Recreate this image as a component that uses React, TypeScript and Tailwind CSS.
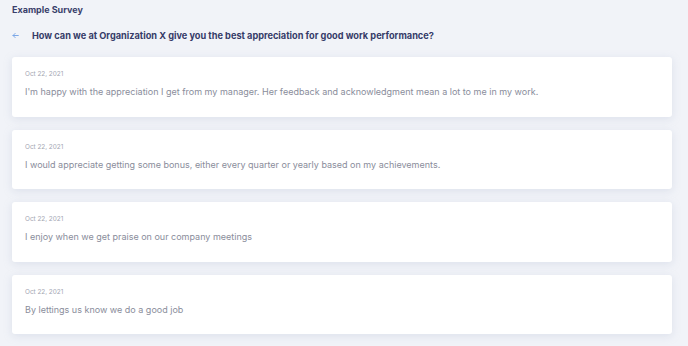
import React from "react";

const responses = [
  "I'm happy with the appreciation I get from my manager. Her feedback and acknowledgment mean a lot to me in my work.",
  "I would appreciate getting some bonus, either every quarter or yearly based on my achievements.",
  "I enjoy when we get praise on our company meetings",
  "By lettings us know we do a good job",
];

export default function App() {
  return (
    <div
      className="w-[688px] h-[346px] overflow-hidden bg-[#f1f3f8] pl-[12px] pr-[16px]"
      style={{ fontFamily: "Inter, 'Noto Sans', sans-serif" }}
    >
      <div className="h-[19px] flex items-center text-[9px] font-bold text-[#3a3f6b]">
        Example Survey
      </div>
      <div className="mt-[8px] h-[17px] flex items-center">
        <svg width="7" height="7" viewBox="0 0 10 10" fill="none" stroke="#7aa6e6" strokeWidth="1.4" strokeLinecap="round" strokeLinejoin="round">
          <path d="M9 5H1.5M4.5 2L1.5 5l3 3" />
        </svg>
        <span className="ml-[13px] text-[9.2px] font-bold text-[#363b68]">
          How can we at Organization X give you the best appreciation for good work performance?
        </span>
      </div>
      <div className="mt-[13px] flex flex-col gap-[13px]">
        {responses.map((r, i) => (
          <div
            key={i}
            className="h-[59.6px] bg-white rounded-[3px] shadow-[0_2px_8px_rgba(160,170,200,0.25)] pl-[13px] pt-[13px]"
          >
            <div className="text-[6.4px] leading-[9px] text-[#a3a6b2]">Oct 22, 2021</div>
            <div className="mt-[7px] text-[9px] leading-[12px] text-[#8a8d9b]">{r}</div>
          </div>
        ))}
      </div>
    </div>
  );
}
